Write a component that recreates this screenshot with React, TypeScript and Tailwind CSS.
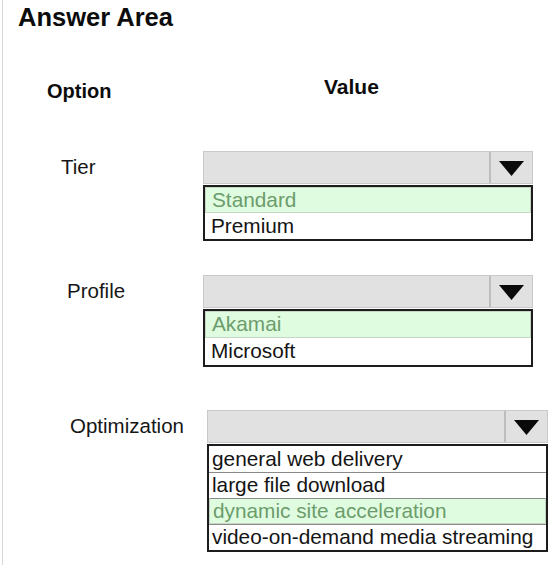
type DropdownProps = {
  label: string;
  labelWidth: string;
  labelPad: string;
  width: string;
  rowHeight: string;
  pad: string;
  options: string[];
  selected: number;
  separators?: boolean;
};

function Arrow() {
  return (
    <svg width="25" height="15" viewBox="0 0 25 15" className="mt-[2px]">
      <polygon points="0,0 25,0 12.5,15" fill="#0a0a0a" />
    </svg>
  );
}

function Dropdown({
  label,
  labelWidth,
  labelPad,
  width,
  rowHeight,
  pad,
  options,
  selected,
  separators,
}: DropdownProps) {
  return (
    <div className="flex">
      {/* label, centred on the closed select */}
      <div className={`${labelWidth} ${labelPad} h-[33px] flex items-center text-[20.5px] text-[#161616]`}>
        {label}
      </div>

      <div className={`${width} flex flex-col`}>
        {/* closed select */}
        <div className="h-[33px] flex bg-[#e1e1e1] border border-[#c9c9c9]">
          <div className="flex-1" />
          <div className="w-[43px] border-l-2 border-l-[#bdbdbd] flex items-center justify-center">
            <Arrow />
          </div>
        </div>

        {/* option list */}
        <div className="mt-[1px] border-2 border-[#1c1c1c] bg-white flex flex-col">
          {options.map((o, i) => (
            <div
              key={o}
              className={`${rowHeight} ${pad} flex items-center text-[20.8px] leading-none ${
                i === selected
                  ? "bg-[#e0fce0] text-[#6c9c6c] border border-[#c6d6c6]"
                  : "text-[#141414]"
              } ${separators && i > 0 ? "border-t border-t-[#8a8a8a]" : ""}`}
            >
              {o}
            </div>
          ))}
        </div>
      </div>
    </div>
  );
}

export default function App() {
  return (
    <div className="w-[554px] h-[565px] bg-white overflow-hidden font-['Liberation_Sans',Arial,sans-serif]">
      <div className="ml-[2px] h-full border-l border-[#d6d6d6] flex flex-col">
        {/* Title */}
        <div className="pl-[15px] pt-[5px] text-[25.5px] leading-[25px] font-bold text-[#0c0c0c]">
          Answer Area
        </div>

        {/* Column headers */}
        <div className="mt-[46px] pl-[44px] flex items-start font-bold text-[#0c0c0c]">
          <div className="w-[277px] mt-[5px] text-[20px] leading-[20px]">Option</div>
          <div className="text-[21px] leading-[21px]">Value</div>
        </div>

        {/* Tier */}
        <div className="mt-[50px]">
          <Dropdown
            label="Tier"
            labelWidth="w-[200px]"
            labelPad="pl-[58px]"
            width="w-[330px]"
            rowHeight="h-[26px]"
            pad="pl-[6px]"
            options={["Standard", "Premium"]}
            selected={0}
          />
        </div>

        {/* Profile */}
        <div className="mt-[34px]">
          <Dropdown
            label="Profile"
            labelWidth="w-[200px]"
            labelPad="pl-[64px]"
            width="w-[330px]"
            rowHeight="h-[27px]"
            pad="pl-[6px]"
            options={["Akamai", "Microsoft"]}
            selected={0}
          />
        </div>

        {/* Optimization */}
        <div className="mt-[43px]">
          <Dropdown
            label="Optimization"
            labelWidth="w-[204px]"
            labelPad="pl-[67px]"
            width="w-[341px]"
            rowHeight="h-[26px]"
            pad="pl-[3px]"
            options={[
              "general web delivery",
              "large file download",
              "dynamic site acceleration",
              "video-on-demand media streaming",
            ]}
            selected={2}
            separators
          />
        </div>
      </div>
    </div>
  );
}
